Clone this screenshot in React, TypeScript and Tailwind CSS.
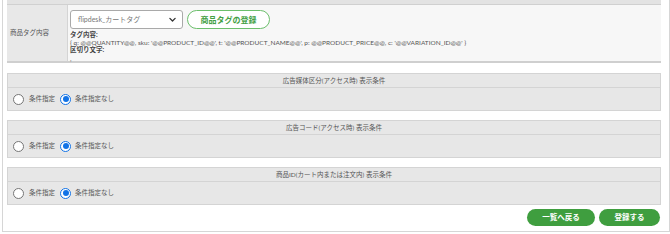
import React from "react";

const font = { fontFamily: "Lato, 'Noto Sans CJK JP', sans-serif" };

function Radio({ checked }: { checked?: boolean }) {
  return checked ? (
    <span className="flex h-[11px] w-[11px] items-center justify-center rounded-full border-[1.5px] border-[#1273e6] bg-white">
      <span className="h-[6px] w-[6px] rounded-full bg-[#1273e6]" />
    </span>
  ) : (
    <span className="h-[11px] w-[11px] rounded-full border border-[#767676] bg-white" />
  );
}

function ConditionBox({ title }: { title: string }) {
  return (
    <div className="border border-[#d4d4d4] bg-[#e7e7e7]">
      {/* Header */}
      <div className="flex h-[14px] items-center justify-center border-b border-[#d4d4d4] text-[6.5px] text-[#555]">
        {title}
      </div>
      {/* Radios */}
      <div className="flex h-[22px] items-center pl-[5px] text-[6.5px] text-[#555]">
        <Radio />
        <span className="ml-[5px] mr-[5px]">条件指定</span>
        <Radio checked />
        <span className="ml-[4px]">条件指定なし</span>
      </div>
    </div>
  );
}

export default function App() {
  return (
    <div className="h-[234px] w-[670px] overflow-hidden bg-white" style={font}>
      <div className="ml-[2px] h-[232px] w-[668px] border-x border-b border-[#d6d6d6] pl-[4px] pr-[8px]">
        {/* Previous row (cut off) */}
        <div className="h-[5px] border-b border-[#d0d0d0] bg-[#e3e3e3]" />

        {/* Tag row */}
        <div className="flex h-[58px] border-b-2 border-[#cfcfcf]">
          <div className="flex w-[61px] items-center border-r border-[#d4d4d4] bg-[#e8e8e8] pl-[3px] text-[6.5px] text-[#555]">
            商品タグ内容
          </div>
          <div className="flex-1 bg-[#f7f7f7] pl-[2px] pt-[5px]">
            <div className="flex items-center gap-[4px]">
              <div className="flex h-[19px] w-[113px] items-center justify-between rounded-[3px] border border-[#a9a9a9] bg-white pl-[7px] pr-[5px] text-[7px] text-[#777]">
                <span>flipdesk_カートタグ</span>
                <svg width="9" height="9" viewBox="0 0 24 24" fill="none" stroke="#333" strokeWidth="3.5" strokeLinecap="round" strokeLinejoin="round">
                  <path d="M5 9l7 7 7-7" />
                </svg>
              </div>
              <button className="flex h-[19px] w-[83px] items-center justify-center rounded-full border border-[#6cbf6c] bg-white text-[8px] font-bold text-[#43a043]">
                商品タグの登録
              </button>
            </div>
            <div className="mt-[2px] text-[6.5px] leading-[7.5px] text-[#444]">
              <div className="font-bold">タグ内容:</div>
              <div className="text-[#555]">
                {"{ q: @@QUANTITY@@, sku: '@@PRODUCT_ID@@', t: '@@PRODUCT_NAME@@', p: @@PRODUCT_PRICE@@, c: '@@VARIATION_ID@@' }"}
              </div>
              <div className="font-bold">区切り文字:</div>
              <div className="mt-[1px] text-[#555]">,</div>
            </div>
          </div>
        </div>

        {/* Conditions */}
        <div className="mt-[10px] flex flex-col gap-[9px]">
          <ConditionBox title="広告媒体区分(アクセス時) 表示条件" />
          <ConditionBox title="広告コード(アクセス時) 表示条件" />
          <ConditionBox title="商品ID(カート内または注文内) 表示条件" />
        </div>

        {/* Actions */}
        <div className="mt-[4px] flex justify-end gap-[4px] pr-[1px]">
          <button className="h-[17px] w-[68px] rounded-full bg-[#3f9e3f] text-[7.5px] font-bold text-white">
            一覧へ戻る
          </button>
          <button className="h-[17px] w-[61px] rounded-full bg-[#3f9e3f] text-[7.5px] font-bold text-white">
            登録する
          </button>
        </div>
      </div>
    </div>
  );
}
